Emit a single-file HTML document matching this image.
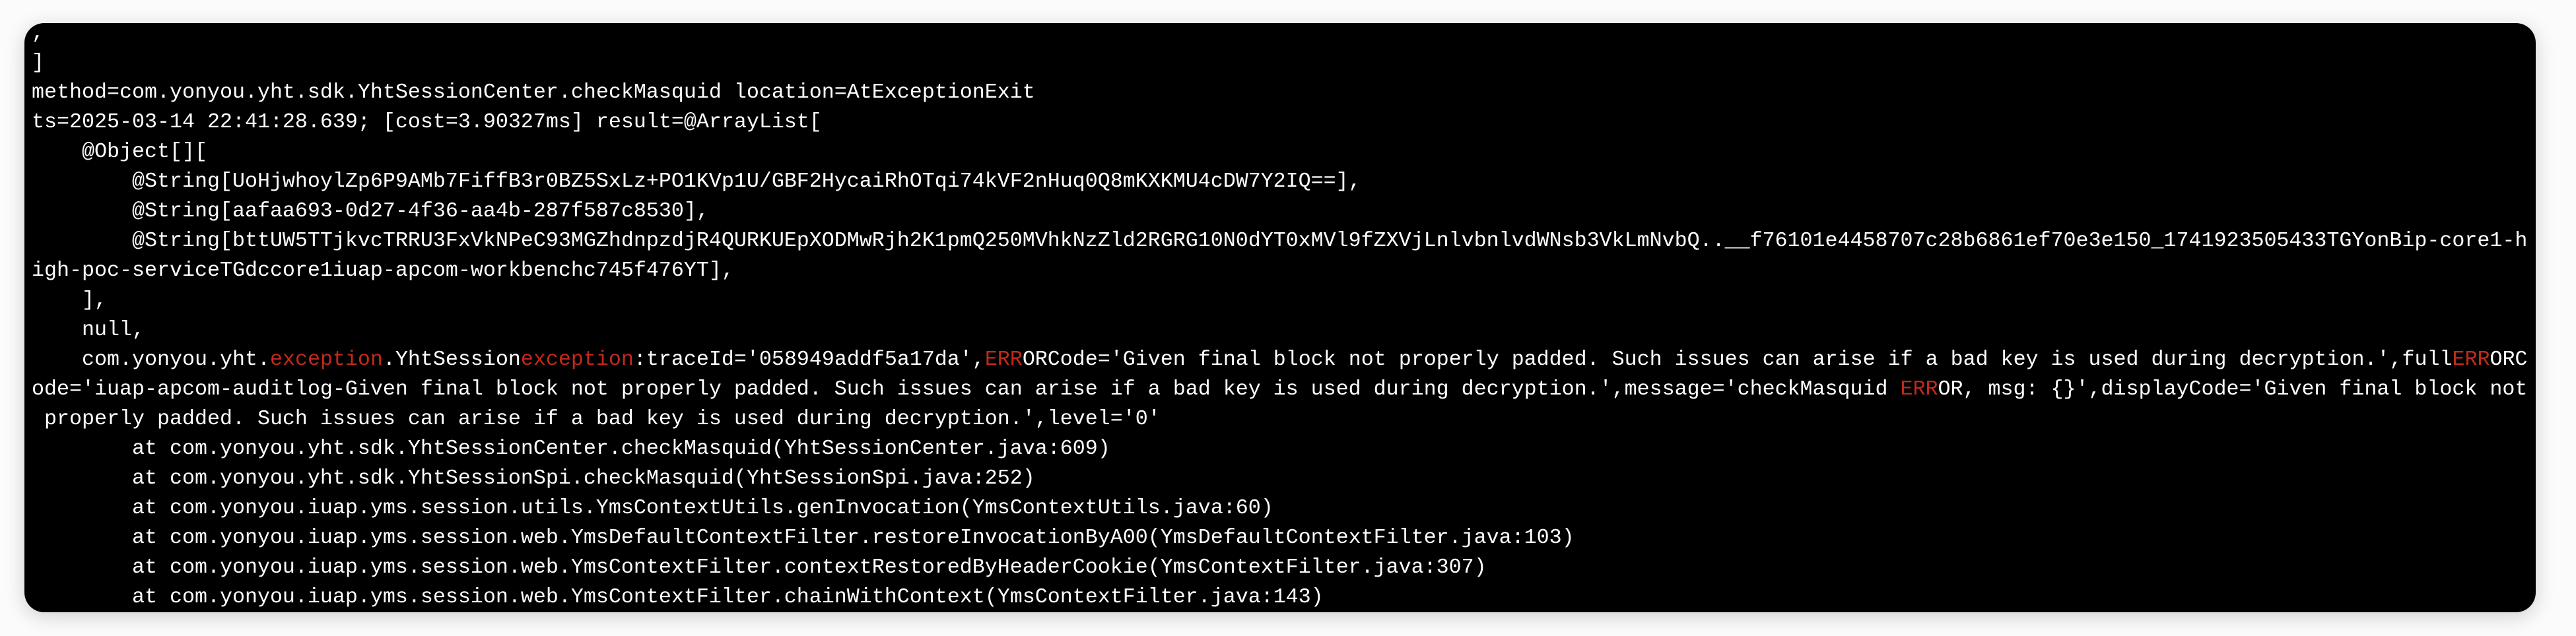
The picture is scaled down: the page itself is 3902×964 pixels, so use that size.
<!DOCTYPE html>
<html><head><meta charset="utf-8"><style>
html,body{margin:0;padding:0;background:#fbfbfb;width:3902px;height:964px;overflow:hidden}
.box{position:absolute;left:37px;top:35px;width:3804px;height:893px;background:#000;border-radius:30px;overflow:hidden;box-shadow:0 6px 30px rgba(0,0,0,0.18)}
pre{position:absolute;left:11px;top:-7.5px;margin:0;font-family:"Liberation Mono",monospace;font-size:31.67px;line-height:45px;color:#fff;white-space:pre;font-weight:normal;letter-spacing:0}
.r{color:#c3291b}
</style></head><body>
<div class="box"><pre>,
]
method=com.yonyou.yht.sdk.YhtSessionCenter.checkMasquid location=AtExceptionExit
ts=2025-03-14 22:41:28.639; [cost=3.90327ms] result=@ArrayList[
    @Object[][
        @String[UoHjwhoylZp6P9AMb7FiffB3r0BZ5SxLz+PO1KVp1U/GBF2HycaiRhOTqi74kVF2nHuq0Q8mKXKMU4cDW7Y2IQ==],
        @String[aafaa693-0d27-4f36-aa4b-287f587c8530],
        @String[bttUW5TTjkvcTRRU3FxVkNPeC93MGZhdnpzdjR4QURKUEpXODMwRjh2K1pmQ250MVhkNzZld2RGRG10N0dYT0xMVl9fZXVjLnlvbnlvdWNsb3VkLmNvbQ..__f76101e4458707c28b6861ef70e3e150_1741923505433TGYonBip-core1-h
igh-poc-serviceTGdccore1iuap-apcom-workbenchc745f476YT],
    ],
    null,
    com.yonyou.yht.<span class="r">exception</span>.YhtSession<span class="r">exception</span>:traceId='058949addf5a17da',<span class="r">ERR</span>ORCode='Given final block not properly padded. Such issues can arise if a bad key is used during decryption.',full<span class="r">ERR</span>ORC
ode='iuap-apcom-auditlog-Given final block not properly padded. Such issues can arise if a bad key is used during decryption.',message='checkMasquid <span class="r">ERR</span>OR, msg: {}',displayCode='Given final block not
 properly padded. Such issues can arise if a bad key is used during decryption.',level='0'
        at com.yonyou.yht.sdk.YhtSessionCenter.checkMasquid(YhtSessionCenter.java:609)
        at com.yonyou.yht.sdk.YhtSessionSpi.checkMasquid(YhtSessionSpi.java:252)
        at com.yonyou.iuap.yms.session.utils.YmsContextUtils.genInvocation(YmsContextUtils.java:60)
        at com.yonyou.iuap.yms.session.web.YmsDefaultContextFilter.restoreInvocationByA00(YmsDefaultContextFilter.java:103)
        at com.yonyou.iuap.yms.session.web.YmsContextFilter.contextRestoredByHeaderCookie(YmsContextFilter.java:307)
        at com.yonyou.iuap.yms.session.web.YmsContextFilter.chainWithContext(YmsContextFilter.java:143)</pre></div>
</body></html>
